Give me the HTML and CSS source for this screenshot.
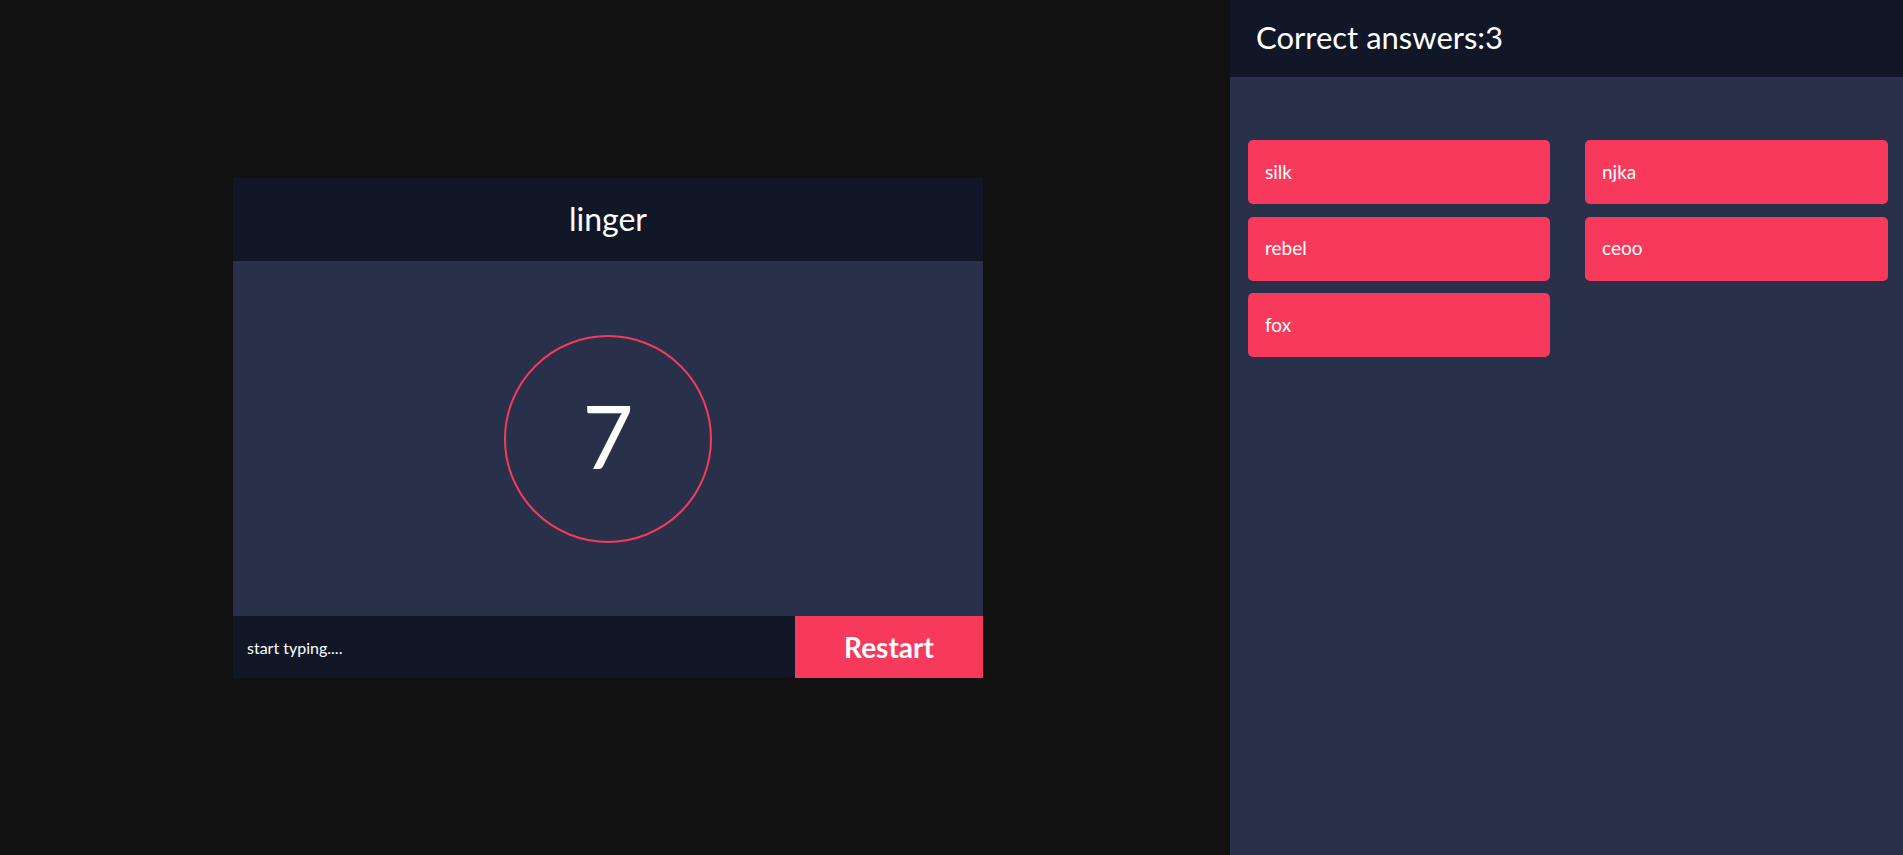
FILE: index.html
```html
<!DOCTYPE html>
<html lang="en">
<head>
<meta charset="utf-8">
<title>Typing game</title>
<link rel="stylesheet" href="styles.css">
</head>
<body>
<div class="app">
  <main class="stage">
    <section class="game">
      <header class="game-head">linger</header>
      <div class="game-body">
        <div class="timer">7</div>
      </div>
      <footer class="game-foot">
        <div class="input">start typing....</div>
        <button class="restart">Restart</button>
      </footer>
    </section>
  </main>
  <aside class="side">
    <header class="side-head">Correct answers:3</header>
    <div class="answers">
      <div class="answer">silk</div>
      <div class="answer">njka</div>
      <div class="answer">rebel</div>
      <div class="answer">ceoo</div>
      <div class="answer">fox</div>
    </div>
  </aside>
</div>
</body>
</html>
```
FILE: styles.css
```css
* { box-sizing: border-box; }
html, body { margin: 0; height: 100%; }
body {
  background: #111111;
  color: #ffffff;
  font-family: "Lato", "Open Sans", sans-serif;
}
.app {
  display: flex;
  height: 855px;
}
.stage {
  width: 1230px;
  display: flex;
  align-items: center;
  padding-left: 233px;
  padding-top: 1px;
}
.game {
  width: 750px;
  height: 500px;
  display: flex;
  flex-direction: column;
}
.game-head {
  height: 83px;
  background: #111727;
  display: flex;
  align-items: center;
  justify-content: center;
  font-size: 32px;
  font-weight: 400;
  padding-bottom: 2px;
}
.game-body {
  height: 355px;
  background: #293049;
  display: flex;
  align-items: center;
  justify-content: center;
}
.timer {
  width: 208px;
  height: 208px;
  border: 2px solid #f73a5b;
  border-radius: 50%;
  display: flex;
  align-items: center;
  justify-content: center;
  font-size: 88px;
  font-weight: 400;
  padding-bottom: 8px;
}
.game-foot {
  height: 62px;
  display: flex;
  background: #111727;
}
.input {
  flex: 1;
  display: flex;
  align-items: center;
  padding-left: 14px;
  font-size: 16px;
}
.restart {
  width: 188px;
  border: 0;
  background: #f73a5b;
  color: #ffffff;
  font-family: inherit;
  font-size: 28px;
  font-weight: 700;
  padding: 0;
}
.side {
  flex: 1;
  background: #293049;
  display: flex;
  flex-direction: column;
}
.side-head {
  height: 77px;
  background: #111727;
  display: flex;
  align-items: center;
  padding-left: 26px;
  font-size: 31px;
  font-weight: 400;
  padding-bottom: 4px;
}
.answers {
  display: grid;
  grid-template-columns: 302px 303px;
  column-gap: 35px;
  row-gap: 12.5px;
  padding: 63px 15px 0 18px;
}
.answer {
  height: 64px;
  background: #f73a5b;
  border-radius: 5px;
  display: flex;
  align-items: center;
  padding-left: 17px;
  font-size: 19px;
  padding-bottom: 2px;
}
```
